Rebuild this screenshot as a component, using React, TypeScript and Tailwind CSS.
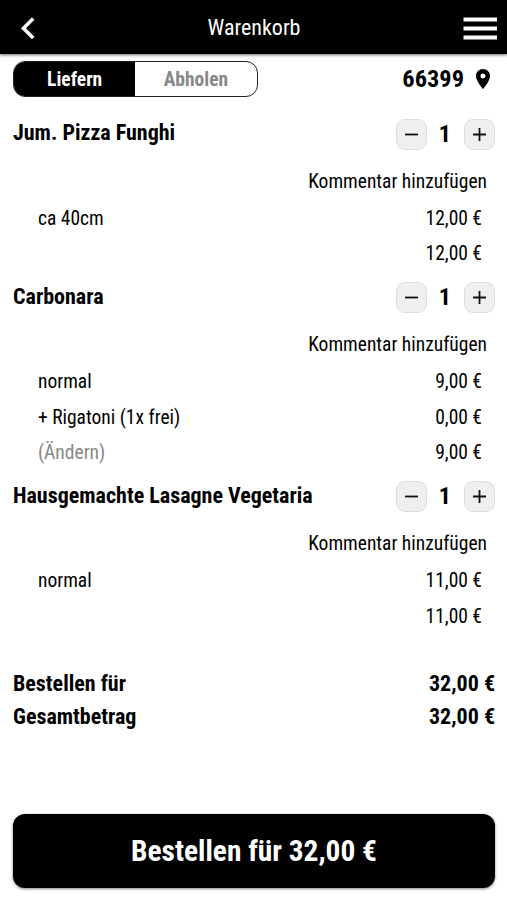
import { useState } from "react";

type CartLine = {
  label: string;
  price: string;
  muted?: boolean;
};

type CartItem = {
  name: string;
  lines: CartLine[];
};

const items: CartItem[] = [
  {
    name: "Jum. Pizza Funghi",
    lines: [
      { label: "ca 40cm", price: "12,00 €" },
      { label: "", price: "12,00 €" },
    ],
  },
  {
    name: "Carbonara",
    lines: [
      { label: "normal", price: "9,00 €" },
      { label: "+ Rigatoni (1x frei)", price: "0,00 €" },
      { label: "(Ändern)", price: "9,00 €", muted: true },
    ],
  },
  {
    name: "Hausgemachte Lasagne Vegetaria",
    lines: [
      { label: "normal", price: "11,00 €" },
      { label: "", price: "11,00 €" },
    ],
  },
];

const stepClass =
  "flex size-[31px] items-center justify-center rounded-[9px] border border-[#dedede] bg-[#efefef]";

function Stepper() {
  const [count, setCount] = useState(1);
  return (
    <div className="flex items-center pt-[0.6px]">
      <button type="button" aria-label="Weniger" className={stepClass} onClick={() => setCount(Math.max(0, count - 1))}>
        <svg viewBox="0 0 15 15" className="size-[15px]" stroke="#111" strokeWidth="1.8">
          <path d="M1 7.5h13" />
        </svg>
      </button>
      <span className="w-[37.500px] pr-px text-center text-[24px] font-bold leading-[31px]">{count}</span>
      <button type="button" aria-label="Mehr" className={stepClass} onClick={() => setCount(count + 1)}>
        <svg viewBox="0 0 15 15" className="size-[15px]" stroke="#111" strokeWidth="1.8">
          <path d="M1 7.5h13M7.5 1v13" />
        </svg>
      </button>
    </div>
  );
}

export default function App() {
  const [delivery, setDelivery] = useState(true);

  return (
    <div className="flex h-[900px] w-[507px] flex-col overflow-hidden bg-white font-['Roboto_Condensed','Roboto',sans-serif] text-[19.5px] text-black [font-stretch:75%]">
      <header className="z-10 flex h-[54px] shrink-0 items-center justify-between bg-black pl-[11px] pr-[10px] pt-px text-white shadow-[0_1px_3px_rgba(0,0,0,0.6)]">
        <svg viewBox="-9 0 34 24" className="h-6 w-[34px]" fill="none" stroke="white" strokeWidth="3.6">
          <path d="M13.200 2.500L3.500 12.300l9.700 9.800" />
        </svg>
        <h1 className="text-[22px]">Warenkorb</h1>
        <svg viewBox="0 0 34 24" className="h-6 w-[34px]" fill="white">
          <path d="M.5 1.500h33.500v4H.5zM.5 10.500h33.500v4H.5zM.5 19.500h33.500v4H.5z" />
        </svg>
      </header>

      <main className="flex flex-1 flex-col pl-[13px] pr-[12px] pt-[7px]">
        <div className="flex h-9 items-center justify-between">
          <div className="flex h-9 w-[244.500px] overflow-hidden rounded-[12px] border border-[#222] font-bold">
            <button
              type="button"
              onClick={() => setDelivery(true)}
              className={`flex-1 pt-[2px] ${delivery ? "bg-black text-white" : "text-[#888]"}`}
            >
              Liefern
            </button>
            <button
              type="button"
              onClick={() => setDelivery(false)}
              className={`flex-1 pt-[2px] ${delivery ? "text-[#888]" : "bg-black text-white"}`}
            >
              Abholen
            </button>
          </div>
          <div className="flex items-center gap-3 pr-[5px]">
            <span className="text-[24.4px] font-bold">66399</span>
            <svg viewBox="5 2 14 20" className="h-5 w-[14px]">
              <path d="M12 2C8.130 2 5 5.130 5 9c0 5.250 7 13 7 13s7-7.750 7-13c0-3.870-3.130-7-7-7zm0 9.500a2.500 2.500 0 1 1 0-5 2.500 2.500 0 0 1 0 5z" />
            </svg>
          </div>
        </div>

        <div className="mt-[21px] flex flex-col gap-[10px]">
          {items.map((item) => (
            <section key={item.name}>
              <div className="flex h-[33px] items-start justify-between">
                <h2 className="text-[22px] font-bold leading-[30px]">{item.name}</h2>
                <Stepper />
              </div>
              <div className="mb-[1.500px] mt-[13px] flex h-[35px] items-center justify-end pr-[8px]">
                Kommentar hinzufügen
              </div>
              <div className="pl-[25px] pr-[13px]">
                {item.lines.map((line, i) => (
                  <div key={i} className="flex h-[35.500px] items-center justify-between">
                    <span className={line.muted ? "text-[#888]" : ""}>{line.label}</span>
                    <span>{line.price}</span>
                  </div>
                ))}
              </div>
            </section>
          ))}
        </div>

        <div className="mt-[33px] text-[22px] font-bold leading-[33px]">
          <div className="flex justify-between">
            <span>Bestellen für</span>
            <span>32,00 €</span>
          </div>
          <div className="flex justify-between">
            <span>Gesamtbetrag</span>
            <span>32,00 €</span>
          </div>
        </div>

        <button
          type="button"
          className="mb-[12px] mt-auto h-[74px] shrink-0 rounded-[12px] bg-black pt-px text-[29.4px] font-bold text-white shadow-[0_1px_3px_rgba(0,0,0,0.5)]"
        >
          Bestellen für 32,00 €
        </button>
      </main>
    </div>
  );
}
